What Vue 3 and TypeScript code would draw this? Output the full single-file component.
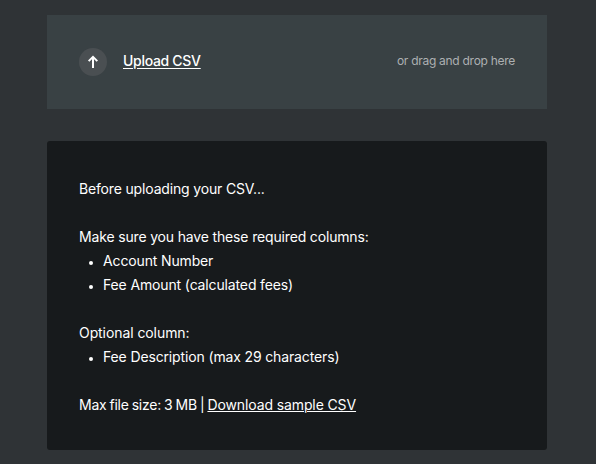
<script setup lang="ts">
const requiredColumns: string[] = ['Account Number', 'Fee Amount (calculated fees)']
const optionalColumns: string[] = ['Fee Description (max 29 characters)']
</script>

<template>
  <main class="page">
    <section class="dropzone">
      <span class="badge">
        <svg class="arrow" viewBox="0 0 14 14" aria-hidden="true">
          <path d="M7 13V2.4M2.7 6.1L7 1.8l4.3 4.3" />
        </svg>
      </span>
      <a class="upload">Upload CSV</a>
      <span class="hint">or drag and drop here</span>
    </section>

    <section class="panel">
      <p class="line">Before uploading your CSV...</p>
      <div class="group">
        <p class="line">Make sure you have these required columns:</p>
        <ul class="list">
          <li v-for="column in requiredColumns" :key="column" class="item">{{ column }}</li>
        </ul>
      </div>
      <div class="group">
        <p class="line optional">Optional column:</p>
        <ul class="list">
          <li v-for="column in optionalColumns" :key="column" class="item">{{ column }}</li>
        </ul>
      </div>
      <p class="line size">Max file size: 3 MB | <a class="sample">Download sample CSV</a></p>
    </section>
  </main>
</template>

<style>
body {
  background: #2f3336;
}
</style>

<style scoped>
.page {
  box-sizing: border-box;
  height: 464px;
  padding: 15px 49px 14px 47px;
  display: flex;
  flex-direction: column;
  gap: 32px;
  background: #2f3336;
  color: #fff;
  font-family: Inter, "Liberation Sans", sans-serif;
  font-size: 14px;
  line-height: 24px;
}
.dropzone {
  box-sizing: border-box;
  height: 94px;
  padding: 0 32px;
  display: flex;
  align-items: center;
  background: #394144;
}
.badge {
  width: 28px;
  height: 28px;
  margin-right: 16px;
  border-radius: 50%;
  display: flex;
  align-items: center;
  justify-content: center;
  background: #4a4f52;
}
.arrow {
  width: 14px;
  height: 14px;
  fill: none;
  stroke: #fff;
  stroke-width: 2;
}
.upload {
  padding-bottom: 2px;
  font-weight: 500;
  letter-spacing: -0.3px;
  text-decoration: underline;
  text-underline-offset: 2px;
  text-decoration-thickness: 1px;
}
.hint {
  margin-left: auto;
  padding-bottom: 2px;
  font-size: 12px;
  letter-spacing: -0.28px;
  color: #adb0b2;
}
.panel {
  box-sizing: border-box;
  height: 309px;
  padding: 36px 32px 0;
  border-radius: 3px;
  display: flex;
  flex-direction: column;
  gap: 24px;
  background: #171a1c;
}
.line {
  margin: 0;
  letter-spacing: -0.16px;
}
.optional {
  letter-spacing: -0.08px;
}
.size {
  letter-spacing: -0.25px;
  word-spacing: -0.6px;
}
.list {
  margin: 0;
  padding: 0;
  list-style: none;
  letter-spacing: -0.14px;
}
.item {
  display: flex;
  align-items: center;
}
.item::before {
  content: "";
  width: 4px;
  height: 4px;
  margin: 4px 10px 0;
  border-radius: 50%;
  background: #fff;
}
.sample {
  letter-spacing: -0.11px;
  word-spacing: 0;
  text-decoration: underline;
  text-underline-offset: 1px;
  text-decoration-thickness: 1px;
}
</style>
